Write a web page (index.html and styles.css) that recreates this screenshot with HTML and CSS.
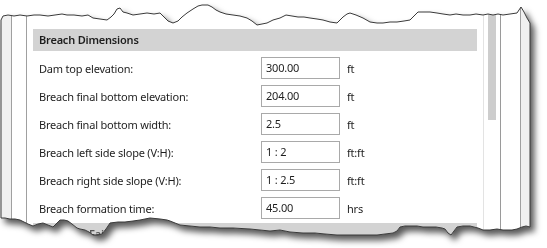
FILE: index.html
```html
<!DOCTYPE html>
<html lang="en">
  <head>
    <meta charset="UTF-8">
    <title>Breach Dimensions</title>
    <link rel="stylesheet" href="styles.css">
  </head>
  <body>
    <div class="paper">
      <div class="window">
        <div class="rail"></div>
        <div class="gutter"></div>
        <div class="content">
          <div class="section-title">Breach Dimensions</div>
          <div class="fields">
            <label>Dam top elevation:</label>
            <div class="box">300.00</div>
            <span class="unit">ft</span>

            <label>Breach final bottom elevation:</label>
            <div class="box">204.00</div>
            <span class="unit">ft</span>

            <label>Breach final bottom width:</label>
            <div class="box">2.5</div>
            <span class="unit">ft</span>

            <label>Breach left side slope (V:H):</label>
            <div class="box">1 : 2</div>
            <span class="unit">ft:ft</span>

            <label>Breach right side slope (V:H):</label>
            <div class="box">1 : 2.5</div>
            <span class="unit">ft:ft</span>

            <label>Breach formation time:</label>
            <div class="box">45.00</div>
            <span class="unit">hrs</span>
          </div>
          <div class="section-title next">Sediment Failure</div>
        </div>
        <div class="scroll"><div class="thumb"></div></div>
        <div class="pane"></div>
        <div class="edge"></div>
      </div>
      <!-- torn outline drawn over the clipped window -->
      <svg class="tear" width="547" height="248" viewBox="0 0 547 248">
        <polygon points="1,20 3,16 8,15 14,16 20,15 27,16 34,15 40,15 48,16 55,15 62,14 67,15 74,15 82,16 88,15 93,18 100,19 107,20 111,17 114,14 117,9 120,8 123,12 127,13 133,15 140,14 147,13 154,14 160,13 164,17 168,21 173,23 178,21 182,17 187,13 193,9 198,6 202,5 208,5 212,7 216,10 220,12 226,14 233,15 240,16 247,18 252,21 257,25 262,24 267,23 273,20 280,18 286,15 292,16 298,17 304,17 310,18 317,19 323,20 330,22 337,23 343,17 347,14 350,13 356,15 363,18 370,22 377,23 383,23 390,22 397,22 404,21 410,20 414,16 418,12 424,12 430,12 437,13 443,14 450,15 456,14 463,15 470,15 476,14 483,15 488,14 493,15 498,14 503,15 510,14 517,13 521,7 524,12 527,18 530,23 530,227 526,226 522,227 517,229 512,230 507,230 503,230 497,229 490,230 483,230 478,228 474,227 470,226 463,226 457,227 454,231 451,235 448,233 445,229 442,228 436,227 430,227 423,227 417,226 410,226 405,226 400,227 397,231 393,233 385,234 377,235 370,235 360,235 350,235 337,235 325,234 315,233 303,233 290,232 280,230 270,231 260,230 250,229 233,228 220,228 210,227 200,227 190,226 180,225 175,223 170,221 167,220 160,219 150,218 140,220 133,221 125,222 118,222 110,223 106,229 102,234 98,235 93,235 89,232 85,230 80,229 77,228 72,224 68,221 64,220 60,220 56,224 53,227 48,225 43,223 38,224 33,226 28,224 24,222 20,220 15,219 10,219 5,218 1,218"/>
      </svg>
    </div>
  </body>
</html>
```

FILE: styles.css
```css
*{
    margin: 0;
    padding: 0;
    box-sizing: border-box;
}
body{
    background-color: white;
    font-family: "Noto Sans", "Liberation Sans", sans-serif;
    font-size: 11px;
    letter-spacing: -0.2px;
    color: #1e1e1e;
}
.paper{
    position: relative;
    width: 547px;
    height: 248px;
    filter: drop-shadow(4px 5px 3px rgba(0, 0, 0, 0.65));
}
.window{
    display: flex;
    width: 531px;
    height: 248px;
    background-color: white;
    clip-path: polygon(1px 20px, 3px 16px, 8px 15px, 14px 16px, 20px 15px, 27px 16px, 34px 15px, 40px 15px, 48px 16px, 55px 15px, 62px 14px, 67px 15px, 74px 15px, 82px 16px, 88px 15px, 93px 18px, 100px 19px, 107px 20px, 111px 17px, 114px 14px, 117px 9px, 120px 8px, 123px 12px, 127px 13px, 133px 15px, 140px 14px, 147px 13px, 154px 14px, 160px 13px, 164px 17px, 168px 21px, 173px 23px, 178px 21px, 182px 17px, 187px 13px, 193px 9px, 198px 6px, 202px 5px, 208px 5px, 212px 7px, 216px 10px, 220px 12px, 226px 14px, 233px 15px, 240px 16px, 247px 18px, 252px 21px, 257px 25px, 262px 24px, 267px 23px, 273px 20px, 280px 18px, 286px 15px, 292px 16px, 298px 17px, 304px 17px, 310px 18px, 317px 19px, 323px 20px, 330px 22px, 337px 23px, 343px 17px, 347px 14px, 350px 13px, 356px 15px, 363px 18px, 370px 22px, 377px 23px, 383px 23px, 390px 22px, 397px 22px, 404px 21px, 410px 20px, 414px 16px, 418px 12px, 424px 12px, 430px 12px, 437px 13px, 443px 14px, 450px 15px, 456px 14px, 463px 15px, 470px 15px, 476px 14px, 483px 15px, 488px 14px, 493px 15px, 498px 14px, 503px 15px, 510px 14px, 517px 13px, 521px 7px, 524px 12px, 527px 18px, 530px 23px, 530px 227px, 526px 226px, 522px 227px, 517px 229px, 512px 230px, 507px 230px, 503px 230px, 497px 229px, 490px 230px, 483px 230px, 478px 228px, 474px 227px, 470px 226px, 463px 226px, 457px 227px, 454px 231px, 451px 235px, 448px 233px, 445px 229px, 442px 228px, 436px 227px, 430px 227px, 423px 227px, 417px 226px, 410px 226px, 405px 226px, 400px 227px, 397px 231px, 393px 233px, 385px 234px, 377px 235px, 370px 235px, 360px 235px, 350px 235px, 337px 235px, 325px 234px, 315px 233px, 303px 233px, 290px 232px, 280px 230px, 270px 231px, 260px 230px, 250px 229px, 233px 228px, 220px 228px, 210px 227px, 200px 227px, 190px 226px, 180px 225px, 175px 223px, 170px 221px, 167px 220px, 160px 219px, 150px 218px, 140px 220px, 133px 221px, 125px 222px, 118px 222px, 110px 223px, 106px 229px, 102px 234px, 98px 235px, 93px 235px, 89px 232px, 85px 230px, 80px 229px, 77px 228px, 72px 224px, 68px 221px, 64px 220px, 60px 220px, 56px 224px, 53px 227px, 48px 225px, 43px 223px, 38px 224px, 33px 226px, 28px 224px, 24px 222px, 20px 220px, 15px 219px, 10px 219px, 5px 218px, 1px 218px);
}
.rail{
    width: 12px;
    background-color: #f0f0f0;
    border-right: 1px solid #a0a0a0;
}
.gutter{
    width: 15px;
    border-right: 1px solid #a0a0a0;
}
.content{
    width: 457px;
    padding: 29px 6px 0 6px;
    border-right: 1px solid #e3e3e3;
}
.section-title{
    height: 22px;
    line-height: 22px;
    padding-left: 6px;
    background-color: #d3d3d3;
    font-weight: 600;
}
.section-title.next{
    margin-top: 4px;
    padding-left: 4px;
    color: #555;
}
.fields{
    display: grid;
    grid-template-columns: 215px 79px auto;
    grid-auto-rows: 22px;
    column-gap: 7px;
    row-gap: 6px;
    align-items: center;
    padding: 6px 0 0 6px;
}
.box{
    height: 22px;
    line-height: 20px;
    padding-left: 4px;
    border: 1px solid #a9a9a9;
}
.scroll{
    width: 17px;
    padding-left: 4px;
    border-right: 1px solid #9a9a9a;
}
.thumb{
    width: 8px;
    height: 120px;
    background-color: #cdcdcd;
}
.pane{
    width: 20px;
    border-right: 1px solid #a0a0a0;
}
.edge{
    width: 10px;
    background-color: #f0f0f0;
}
.tear{
    position: absolute;
    left: 0;
    top: 0;
}
.tear polygon{
    fill: none;
    stroke: #3a3a3a;
    stroke-width: 1;
}
```
